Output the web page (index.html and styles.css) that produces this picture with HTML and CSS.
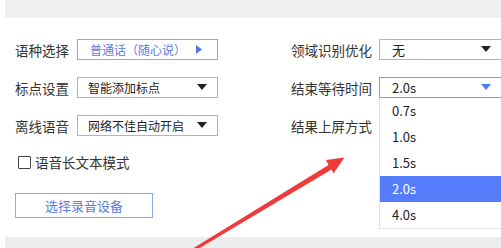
FILE: index.html
```html
<!DOCTYPE html>
<html lang="zh-CN">
<head>
    <meta charset="UTF-8">
    <title>语音设置</title>
    <link rel="stylesheet" href="styles.css">
</head>
<body>
    <div class="top-band"></div>
    <div class="panel">
        <div class="col col-left">
            <div class="row">
                <span class="label">语种选择</span>
                <div class="select select-blue">
                    <span>普通话（随心说）</span>
                    <svg class="caret" width="8" height="9" viewBox="0 0 8 9"><path d="M1 0 L7 4.5 L1 9 Z" fill="#4d78f0"/></svg>
                </div>
            </div>
            <div class="row">
                <span class="label">标点设置</span>
                <div class="select">
                    <span>智能添加标点</span>
                    <svg class="caret" width="10" height="7" viewBox="0 0 10 7"><path d="M0 0 L10 0 L5 6 Z" fill="#222"/></svg>
                </div>
            </div>
            <div class="row">
                <span class="label">离线语音</span>
                <div class="select">
                    <span>网络不佳自动开启</span>
                    <svg class="caret" width="10" height="7" viewBox="0 0 10 7"><path d="M0 0 L10 0 L5 6 Z" fill="#222"/></svg>
                </div>
            </div>
            <label class="check-row">
                <span class="checkbox"></span>
                <span>语音长文本模式</span>
            </label>
            <button class="device-btn">选择录音设备</button>
        </div>
        <div class="col col-right">
            <div class="row">
                <span class="label">领域识别优化</span>
                <div class="select wide">
                    <span>无</span>
                    <svg class="caret" width="10" height="7" viewBox="0 0 10 7"><path d="M0 0 L10 0 L5 6 Z" fill="#222"/></svg>
                </div>
            </div>
            <div class="row">
                <span class="label">结束等待时间</span>
                <div class="select wide open">
                    <span>2.0s</span>
                    <svg class="caret" width="10" height="7" viewBox="0 0 10 7"><path d="M0 0 L10 0 L5 6 Z" fill="#4d78f0"/></svg>
                    <ul class="menu">
                        <li>0.7s</li>
                        <li>1.0s</li>
                        <li>1.5s</li>
                        <li class="active">2.0s</li>
                        <li>4.0s</li>
                    </ul>
                </div>
            </div>
            <div class="row">
                <span class="label">结果上屏方式</span>
            </div>
        </div>
    </div>
    <div class="bottom-band"></div>

    <!-- red annotation arrow -->
    <svg class="annot" width="501" height="248" viewBox="0 0 501 248">
        <path d="M192 249 L328.5 165 L326 160 L344.5 157.5 L333.5 173.5 L331.5 169.5 L198 249 Z" fill="#f03a3a"/>
    </svg>
</body>
</html>
```

FILE: styles.css
```css
html, body {
    margin: 0;
    height: 248px;
    overflow: hidden;
}
body {
    font-family: "Noto Sans CJK SC", "Noto Sans", sans-serif;
    font-size: 13px;
    color: #333;
    background: #fff;
    position: relative;
}
.top-band {
    margin-left: 5px;
    height: 18px;
    background: #f0f0f0;
}
.bottom-band {
    margin-left: 5px;
    height: 11px;
    background: #ededed;
}
.panel {
    display: flex;
    height: 219px;
    padding-top: 21px;
    box-sizing: border-box;
}
.col {
    display: flex;
    flex-direction: column;
    gap: 17px;
}
.col-left {
    padding-left: 15px;
    width: 270px;
    flex-shrink: 0;
}
.row {
    display: flex;
    align-items: center;
    height: 21px;
}
.label {
    font-size: 13.5px;
    flex-shrink: 0;
}
.col-left .label {
    width: 62px;
}
.col-right .label {
    width: 87px;
    text-align: right;
    padding-right: 7px;
}
.select {
    position: relative;
    box-sizing: border-box;
    width: 141px;
    height: 21px;
    border: 1px solid #b4b4b4;
    display: flex;
    align-items: center;
    justify-content: space-between;
    padding: 0 10px 0 10px;
    color: #222;
    font-size: 12px;
    flex-shrink: 0;
}
.select-blue {
    border-color: #8aa6ee;
    color: #5a7ee0;
    padding-left: 12px;
    padding-right: 14px;
}
.wide {
    width: 125px;
    padding-left: 12px;
    padding-right: 12px;
    font-size: 13px;
}
.open {
    border-color: #7d9aee;
}
.menu {
    position: absolute;
    top: 20px;
    left: -1px;
    width: 121px;
    margin: 0;
    padding: 0;
    list-style: none;
    background: #fff;
    border: 1px solid #e4e4e4;
    border-top: none;
    z-index: 2;
}
.menu li {
    height: 26px;
    line-height: 26px;
    padding-left: 12px;
    color: #222;
}
.menu li.active {
    background: #557cfb;
    color: #fff;
}
.check-row {
    display: flex;
    align-items: center;
    gap: 4px;
    margin-left: 3px;
    margin-top: 1px;
    height: 16px;
    font-size: 13.5px;
}
.checkbox {
    width: 11px;
    height: 11px;
    border: 1.5px solid #444;
    border-radius: 1px;
}
.device-btn {
    width: 138px;
    height: 25px;
    margin-top: 6px;
    background: #fff;
    border: 1px solid #8aa6ee;
    color: #5a7ee0;
    font-family: inherit;
    font-size: 13px;
    padding: 0;
}
.annot {
    position: absolute;
    left: 0;
    top: 0;
    pointer-events: none;
}
```
